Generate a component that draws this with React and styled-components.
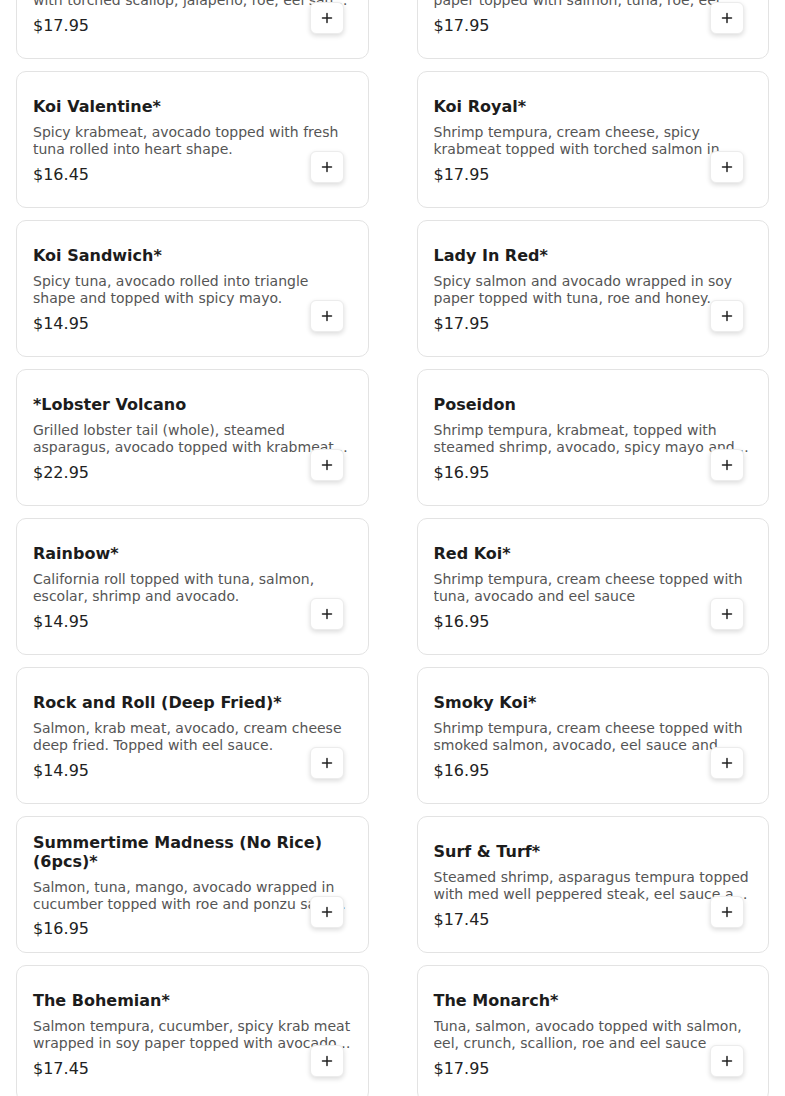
import React from "react";
import styled, { createGlobalStyle } from "styled-components";

const Global = createGlobalStyle`
  html, body { margin: 0; padding: 0; background: #fff; }
  body { font-family: "DejaVu Sans", sans-serif; }
  * { box-sizing: border-box; }
`;

const Viewport = styled.div`
  height: 1096px;
  overflow: hidden;
`;

const Grid = styled.div`
  display: grid;
  grid-template-columns: 1fr 1fr;
  column-gap: 48px;
  row-gap: 12px;
  padding: 0 16px;
  margin-top: -78px;
`;

const Card = styled.div`
  position: relative;
  height: 137px;
  border: 1px solid #e3e3e3;
  border-radius: 10px;
  background: #fff;
  padding: 16px 16px 14px;
  display: flex;
  flex-direction: column;
  justify-content: center;
`;

const Title = styled.div`
  font-size: 16px;
  line-height: 1.2;
  font-weight: 700;
  color: #1c1c1c;
`;

const Desc = styled.div`
  margin-top: 8px;
  font-size: 14px;
  line-height: 1.2;
  color: #555;
  display: -webkit-box;
  -webkit-line-clamp: 2;
  -webkit-box-orient: vertical;
  overflow: hidden;
`;

const Price = styled.div`
  margin-top: 7px;
  font-size: 16px;
  line-height: 1.2;
  color: #222;
`;

const AddButton = styled.button`
  position: absolute;
  right: 24px;
  bottom: 24px;
  width: 34px;
  height: 32px;
  padding: 0;
  border: 1px solid #ececec;
  border-radius: 6px;
  background: #fff;
  box-shadow: 0 2px 5px rgba(0, 0, 0, 0.14);
  display: flex;
  align-items: center;
  justify-content: center;
  cursor: pointer;
`;

const items = [
  ["Koi Fire*", "Shrimp tempura, spicy krabmeat, cucumber with torched scallop, jalapeno, roe, eel sauce and spicy mayo.", "$17.95"],
  ["Koi Dragon*", "Spicy salmon and avocado wrapped in soy paper topped with salmon, tuna, roe, eel sauce and scallion.", "$17.95"],
  ["Koi Valentine*", "Spicy krabmeat, avocado topped with fresh tuna rolled into heart shape.", "$16.45"],
  ["Koi Royal*", "Shrimp tempura, cream cheese, spicy krabmeat topped with torched salmon in spicy mayo and eel sauce.", "$17.95"],
  ["Koi Sandwich*", "Spicy tuna, avocado rolled into triangle shape and topped with spicy mayo.", "$14.95"],
  ["Lady In Red*", "Spicy salmon and avocado wrapped in soy paper topped with tuna, roe and honey.", "$17.95"],
  ["*Lobster Volcano", "Grilled lobster tail (whole), steamed asparagus, avocado topped with krabmeat and spicy mayo.", "$22.95"],
  ["Poseidon", "Shrimp tempura, krabmeat, topped with steamed shrimp, avocado, spicy mayo and eel sauce.", "$16.95"],
  ["Rainbow*", "California roll topped with tuna, salmon, escolar, shrimp and avocado.", "$14.95"],
  ["Red Koi*", "Shrimp tempura, cream cheese topped with tuna, avocado and eel sauce", "$16.95"],
  ["Rock and Roll (Deep Fried)*", "Salmon, krab meat, avocado, cream cheese deep fried. Topped with eel sauce.", "$14.95"],
  ["Smoky Koi*", "Shrimp tempura, cream cheese topped with smoked salmon, avocado, eel sauce and spicy mayo.", "$16.95"],
  ["Summertime Madness (No Rice) (6pcs)*", "Salmon, tuna, mango, avocado wrapped in cucumber topped with roe and ponzu sauce.", "$16.95"],
  ["Surf & Turf*", "Steamed shrimp, asparagus tempura topped with med well peppered steak, eel sauce and spicy mayo.", "$17.45"],
  ["The Bohemian*", "Salmon tempura, cucumber, spicy krab meat wrapped in soy paper topped with avocado and eel sauce.", "$17.45"],
  ["The Monarch*", "Tuna, salmon, avocado topped with salmon, eel, crunch, scallion, roe and eel sauce", "$17.95"],
];

const PlusIcon = () => (
  <svg width="12" height="12" viewBox="0 0 12 12" aria-hidden="true">
    <path d="M6 1.5v9M1.5 6h9" stroke="#222" strokeWidth="1.5" strokeLinecap="round" />
  </svg>
);

export default function App() {
  return (
    <>
      <Global />
      <Viewport>
        <Grid>
          {items.map(([name, desc, price]) => (
            <Card key={name}>
              <Title>{name}</Title>
              <Desc>{desc}</Desc>
              <Price>{price}</Price>
              <AddButton aria-label={`Add ${name}`}>
                <PlusIcon />
              </AddButton>
            </Card>
          ))}
        </Grid>
      </Viewport>
    </>
  );
}
